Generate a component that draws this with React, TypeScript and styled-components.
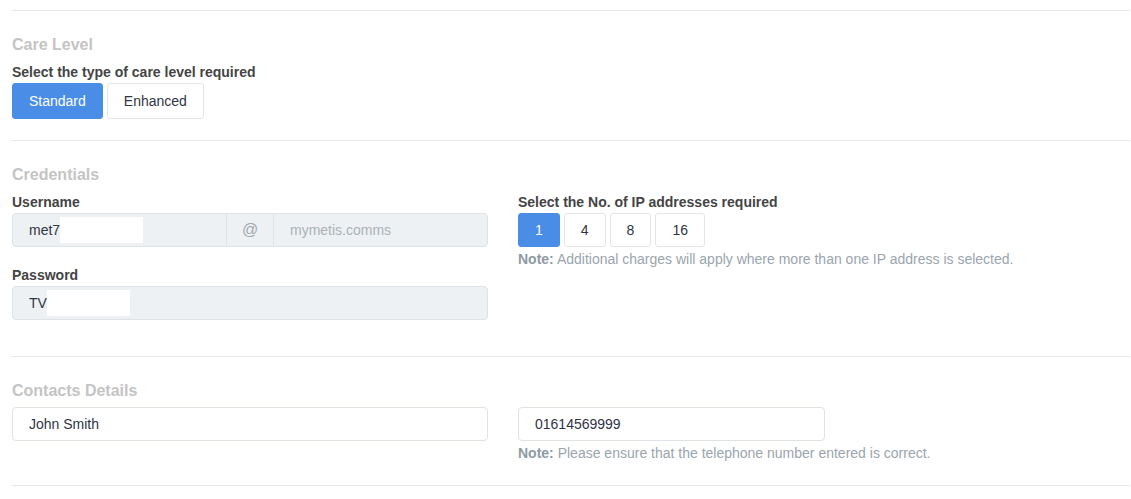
import React from "react";
import styled, { createGlobalStyle } from "styled-components";

const Global = createGlobalStyle`
  html, body { margin: 0; padding: 0; background: #ffffff; }
  body { font-family: "Liberation Sans", Arial, Helvetica, sans-serif; color: #333a48; }
  * { box-sizing: border-box; }
`;

const Page = styled.div`
  padding: 10px 1px 0 12px;
`;

const Section = styled.section<{ $pb: number }>`
  border-top: 1px solid #e6e8e9;
  padding-top: 24px;
  padding-bottom: ${(p) => p.$pb}px;
`;

const End = styled.div`
  border-top: 1px solid #e6e8e9;
  height: 13px;
`;

const Heading = styled.h3<{ $mb: number }>`
  margin: 0 0 ${(p) => p.$mb}px;
  font-size: 16px;
  line-height: 20px;
  font-weight: 700;
  color: #c4c4c4;
`;

const Label = styled.div`
  font-size: 14px;
  line-height: 20px;
  font-weight: 700;
  color: #444444;
  margin-bottom: 1px;
`;

const Row = styled.div`
  display: flex;
  gap: 30px;
`;

const Col = styled.div<{ $w?: number }>`
  display: flex;
  flex-direction: column;
  width: ${(p) => (p.$w ? `${p.$w}px` : "auto")};
  flex: ${(p) => (p.$w ? "0 0 auto" : "1 1 auto")};
`;

const ButtonGroup = styled.div`
  display: flex;
  gap: 4px;
`;

const Toggle = styled.button<{ $active?: boolean; $h: number }>`
  font-family: inherit;
  font-size: 14px;
  height: ${(p) => p.$h}px;
  padding: 0 16px;
  border-radius: 3px;
  border: 1px solid ${(p) => (p.$active ? "#4a8de6" : "#e3e6e8")};
  background: ${(p) => (p.$active ? "#4a8de6" : "#ffffff")};
  color: ${(p) => (p.$active ? "#ffffff" : "#2f3546")};
  cursor: pointer;
`;

const InputGroup = styled.div`
  display: flex;
  height: 34px;
  border: 1px solid #dde3e6;
  border-radius: 4px;
  background: #eef1f3;
  overflow: hidden;
`;

const GroupCell = styled.div<{ $w?: number; $muted?: boolean }>`
  display: flex;
  align-items: center;
  padding-left: 16px;
  font-size: 14px;
  color: ${(p) => (p.$muted ? "#a9b1b7" : "#2f3546")};
  width: ${(p) => (p.$w ? `${p.$w}px` : "auto")};
  flex: ${(p) => (p.$w ? "0 0 auto" : "1 1 auto")};
`;

const Addon = styled.div`
  width: 48px;
  display: flex;
  align-items: center;
  justify-content: center;
  border-left: 1px solid #dde3e6;
  border-right: 1px solid #dde3e6;
  color: #a0a8ae;
  font-size: 16px;
`;

const Field = styled.div<{ $disabled?: boolean; $w?: number }>`
  display: flex;
  align-items: center;
  height: 34px;
  width: ${(p) => (p.$w ? `${p.$w}px` : "100%")};
  padding-left: 16px;
  border: 1px solid #dde3e6;
  border-radius: 4px;
  background: ${(p) => (p.$disabled ? "#eef1f3" : "#ffffff")};
  font-size: 14px;
  color: #2f3546;
`;

const Redact = styled.span<{ $w: number }>`
  display: inline-block;
  width: ${(p) => p.$w}px;
  height: 26px;
  background: #ffffff;
`;

const Note = styled.p`
  margin: 2px 0 0;
  font-size: 14px;
  line-height: 20px;
  color: #9aa5ad;
  b { font-weight: 700; color: #8e9aa3; }
`;

const Spacer = styled.div<{ $h: number }>`
  height: ${(p) => p.$h}px;
`;

export default function App() {
  const [care, setCare] = React.useState("Standard");
  const [ips, setIps] = React.useState("1");
  return (
    <Page>
      <Global />
      <Section $pb={21}>
        <Heading $mb={7}>Care Level</Heading>
        <Label>Select the type of care level required</Label>
        <ButtonGroup>
          {["Standard", "Enhanced"].map((c) => (
            <Toggle key={c} $h={36} $active={care === c} onClick={() => setCare(c)}>
              {c}
            </Toggle>
          ))}
        </ButtonGroup>
      </Section>
      <Section $pb={36}>
        <Heading $mb={7}>Credentials</Heading>
        <Row>
          <Col $w={476}>
            <Label>Username</Label>
            <InputGroup>
              <GroupCell $w={213}>
                met7<Redact $w={83} />
              </GroupCell>
              <Addon>@</Addon>
              <GroupCell $muted>mymetis.comms</GroupCell>
            </InputGroup>
            <Spacer $h={18} />
            <Label>Password</Label>
            <Field $disabled>
              TV<Redact $w={83} />
            </Field>
          </Col>
          <Col>
            <Label>Select the No. of IP addresses required</Label>
            <ButtonGroup>
              {["1", "4", "8", "16"].map((n) => (
                <Toggle key={n} $h={34} $active={ips === n} onClick={() => setIps(n)}>
                  {n}
                </Toggle>
              ))}
            </ButtonGroup>
            <Note>
              <b>Note:</b> Additional charges will apply where more than one IP address is selected.
            </Note>
          </Col>
        </Row>
      </Section>
      <Section $pb={22}>
        <Heading $mb={6}>Contacts Details</Heading>
        <Row>
          <Col $w={476}>
            <Field>John Smith</Field>
          </Col>
          <Col>
            <Field $w={307}>01614569999</Field>
            <Note>
              <b>Note:</b> Please ensure that the telephone number entered is correct.
            </Note>
          </Col>
        </Row>
      </Section>
      <End />
    </Page>
  );
}
